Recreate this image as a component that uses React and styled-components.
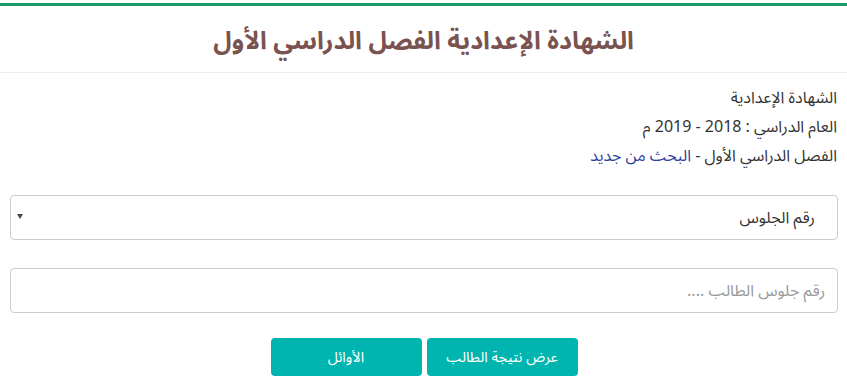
import React from "react";
import styled, { createGlobalStyle } from "styled-components";

const GlobalStyle = createGlobalStyle`
  body {
    margin: 0;
    background: #fff;
    font-family: "Noto Sans Arabic", "DejaVu Sans", sans-serif;
    color: #333;
  }
`;

const Page = styled.div`
  direction: rtl;
  padding-top: 3px;
`;

const Header = styled.div`
  border-top: 3px solid #1f9a6b;
  border-bottom: 1px solid #eee;
  height: 70px;
  padding-top: 3px;
  box-sizing: border-box;
  display: flex;
  align-items: center;
  justify-content: center;
`;

const Title = styled.h1`
  margin: 0;
  font-size: 25px;
  font-weight: bold;
  color: #7a5350;
`;

const Body = styled.div`
  padding: 11px 9px 0 10px;
`;

const Info = styled.div`
  padding-right: 1px;
  font-size: 16px;
  line-height: 29px;
  color: #333;
  p {
    margin: 0;
  }
  a {
    color: #2a3f9e;
    text-decoration: none;
  }
`;

const Field = styled.div`
  position: relative;
  margin-top: ${(p) => p.$top}px;
`;

const Select = styled.select`
  appearance: none;
  width: 100%;
  height: 45px;
  border: 1px solid #ccc;
  border-radius: 4px;
  background: #fff;
  padding: 0 22px;
  font-family: inherit;
  font-size: 16px;
  color: #333;
  direction: rtl;
`;

const Arrow = styled.span`
  position: absolute;
  left: 7px;
  top: 19px;
  width: 0;
  height: 0;
  border-left: 3px solid transparent;
  border-right: 3px solid transparent;
  border-top: 5px solid #444;
  pointer-events: none;
`;

const Input = styled.input`
  box-sizing: border-box;
  width: 100%;
  height: 45px;
  border: 1px solid #ccc;
  border-radius: 4px;
  padding: 0 12px;
  font-family: inherit;
  font-size: 16px;
  direction: rtl;
  &::placeholder {
    color: #999;
  }
`;

const Actions = styled.div`
  display: flex;
  justify-content: center;
  gap: 5px;
  margin-top: 25px;
`;

const Button = styled.button`
  width: 151px;
  height: 38px;
  border: none;
  border-radius: 4px;
  background: #00b5b0;
  color: #fff;
  font-family: inherit;
  font-size: 14.5px;
`;

export default function App() {
  return (
    <Page>
      <GlobalStyle />
      <Header>
        <Title>الشهادة الإعدادية الفصل الدراسي الأول</Title>
      </Header>
      <Body>
        <Info>
          <p>الشهادة الإعدادية</p>
          <p>العام الدراسي : 2018 - 2019 م</p>
          <p>
            الفصل الدراسي الأول - <a href="#">البحث من جديد</a>
          </p>
        </Info>
        <Field $top={24}>
          <Select defaultValue="seat">
            <option value="seat">رقم الجلوس</option>
            <option value="name">الاسم</option>
          </Select>
          <Arrow />
        </Field>
        <Field $top={28}>
          <Input placeholder="رقم جلوس الطالب ...." />
        </Field>
        <Actions>
          <Button>عرض نتيجة الطالب</Button>
          <Button>الأوائل</Button>
        </Actions>
      </Body>
    </Page>
  );
}
